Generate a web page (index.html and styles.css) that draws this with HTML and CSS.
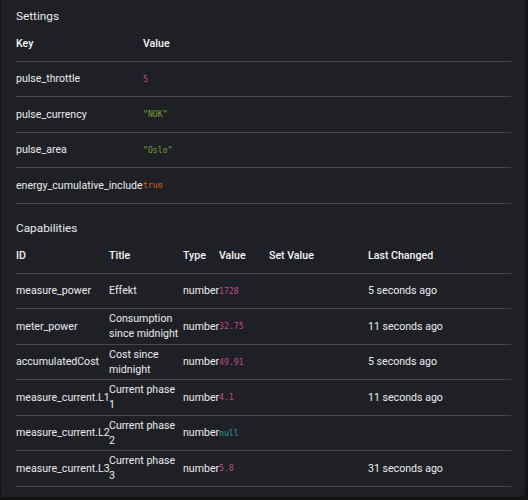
FILE: index.html
```html
<!DOCTYPE html>
<html>
<head>
<meta charset="utf-8">
<link rel="stylesheet" href="styles.css">
</head>
<body>
<div class="card">
  <h2 class="title">Settings</h2>
  <table class="tbl settings">
    <colgroup><col class="c-key"><col></colgroup>
    <thead><tr><th>Key</th><th>Value</th></tr></thead>
    <tbody>
      <tr><td>pulse_throttle</td><td><code class="num">5</code></td></tr>
      <tr><td>pulse_currency</td><td><code class="str">"NOK"</code></td></tr>
      <tr><td>pulse_area</td><td><code class="str">"Oslo"</code></td></tr>
      <tr><td>energy_cumulative_include</td><td><code class="bool">true</code></td></tr>
    </tbody>
  </table>
  <h2 class="title second">Capabilities</h2>
  <table class="tbl caps">
    <colgroup><col class="c-id"><col class="c-title"><col class="c-type"><col class="c-val"><col class="c-set"><col></colgroup>
    <thead><tr><th>ID</th><th>Title</th><th>Type</th><th>Value</th><th>Set Value</th><th>Last Changed</th></tr></thead>
    <tbody>
      <tr><td>measure_power</td><td>Effekt</td><td>number</td><td><code class="num">1728</code></td><td></td><td>5 seconds ago</td></tr>
      <tr><td>meter_power</td><td>Consumption since midnight</td><td>number</td><td><code class="num">32.75</code></td><td></td><td>11 seconds ago</td></tr>
      <tr><td>accumulatedCost</td><td>Cost since midnight</td><td>number</td><td><code class="num">49.91</code></td><td></td><td>5 seconds ago</td></tr>
      <tr><td>measure_current.L1</td><td>Current phase 1</td><td>number</td><td><code class="num">4.1</code></td><td></td><td>11 seconds ago</td></tr>
      <tr><td>measure_current.L2</td><td>Current phase 2</td><td>number</td><td><code class="null">null</code></td><td></td><td></td></tr>
      <tr><td>measure_current.L3</td><td>Current phase 3</td><td>number</td><td><code class="num">5.8</code></td><td></td><td>31 seconds ago</td></tr>
    </tbody>
  </table>
</div>
</body>
</html>
```
FILE: styles.css
```css
html, body {
  margin: 0;
  padding: 0;
  background: #131316;
}
body {
  font-family: Roboto, "Liberation Sans", sans-serif;
  color: #ececee;
  width: 528px;
  height: 500px;
  overflow: hidden;
}
.card {
  margin: 0 3px 0 1px;
  background: #1f2025;
  border-radius: 0 0 4px 4px;
  padding: 6px 14px 10px 15px;
}
.title {
  margin: 0;
  font-size: 11.8px;
  font-weight: 400;
  line-height: 20px;
  color: #ececee;
}
.title.second {
  margin-top: 14.5px;
}
.tbl {
  width: 100%;
  border-collapse: collapse;
  table-layout: fixed;
  font-size: 10.6px;
  line-height: 15px;
}
.tbl th, .tbl td {
  padding: 0;
  height: 34.5px;
  text-align: left;
  vertical-align: middle;
  border-bottom: 1px solid #46474c;
}
.tbl th {
  font-weight: 500;
  color: #f6f6f8;
}
.c-key { width: 127px; }
.c-id { width: 93px; }
.c-title { width: 74px; }
.c-type { width: 36px; }
.c-val { width: 50px; }
.c-set { width: 99px; }
.caps td:first-child,
.caps td:nth-child(3) { white-space: nowrap; }
code {
  font-family: "DejaVu Sans Mono", "Liberation Mono", monospace;
  font-size: 8.2px;
}
.num { color: #c04d8c; }
.str { color: #74a236; }
.bool { color: #d9621f; }
.null { color: #2ea3a2; }
```
